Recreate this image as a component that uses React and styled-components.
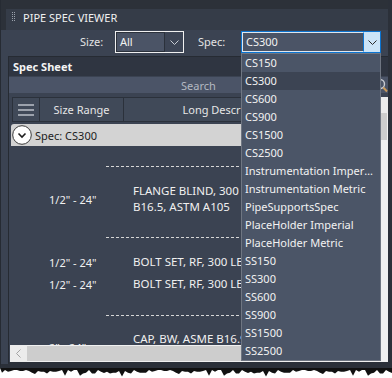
import React from "react";
import styled, { createGlobalStyle } from "styled-components";

const GlobalStyle = createGlobalStyle`
  html, body { margin: 0; padding: 0; background: #ffffff; }
  body { font-family: "Segoe UI", "Noto Sans", sans-serif; font-size: 11px; }
`;

const Screen = styled.div`
  width: 392px;
  height: 378px;
  overflow: hidden;
  background: #ffffff;
  display: flex;
  flex-direction: column;
`;

const Palette = styled.div`
  height: 368px;
  flex-shrink: 0;
  box-sizing: border-box;
  background: #3b4352;
  border-left: 1px solid #262b33;
  border-right: 4px solid #2b3039;
  border-bottom: 4px solid #2b3039;
  display: flex;
  flex-direction: column;
`;

const TopStrip = styled.div`
  background: #2c3139;
  padding: 9px 0 0 5px;
`;

const TitleBar = styled.div`
  height: 21px;
  box-sizing: border-box;
  background: #353c48;
  display: flex;
  align-items: flex-start;
  gap: 7px;
  padding: 2px 0 0 6px;
  color: #f0f0f0;
  line-height: 14px;
`;

const Grip = styled.svg`
  margin-top: 1px;
  flex-shrink: 0;
`;

const Toolbar = styled.div`
  height: 25px;
  box-sizing: border-box;
  display: flex;
  align-items: flex-start;
  padding: 1px 0 0 79px;
  color: #e4e4e4;
`;

const Label = styled.span`
  width: ${p => p.$w}px;
  margin-left: ${p => p.$ml || 0}px;
  line-height: 22px;
`;

const Combo = styled.div`
  position: relative;
  width: ${p => p.$w}px;
  height: 22px;
  box-sizing: border-box;
  display: flex;
  border: 1px solid ${p => (p.$open ? "#0b74d1" : "#f0f0f0")};
`;

const ComboText = styled.div`
  flex: 1;
  box-sizing: border-box;
  background: #4b5466;
  border: 1px solid ${p => (p.$open ? "#dfe7ef" : "#2b313b")};
  border-right: 1px solid ${p => (p.$open ? "#0b74d1" : "#2b313b")};
  color: #f2f2f2;
  padding-left: 3px;
  line-height: 18px;
`;

const ComboArrow = styled.div`
  width: ${p => (p.$open ? 16 : 18)}px;
  display: flex;
  align-items: center;
  justify-content: center;
  background: ${p => (p.$open ? "#cce4f7" : "#3d4555")};
`;

const DropList = styled.div`
  position: absolute;
  top: 21px;
  left: -1px;
  width: 140px;
  box-sizing: border-box;
  border: 1px solid #6f7682;
  background: #4b5567;
  z-index: 10;
`;

const DropItem = styled.div`
  height: 18px;
  line-height: 18px;
  padding: 0 7px 0 3px;
  color: #f2f2f2;
  white-space: nowrap;
  overflow: hidden;
  text-overflow: ellipsis;
  background: ${p => (p.$active ? "#3c4453" : "transparent")};
`;

const Panel = styled.div`
  flex: 1;
  min-height: 0;
  margin: 1px 0 0 7px;
  display: flex;
  flex-direction: column;
  border-top: 1px solid #262b33;
  border-left: 1px solid #262b33;
  border-bottom: 2px solid #2b3039;
`;

const SheetHeader = styled.div`
  height: 19px;
  line-height: 19px;
  padding-left: 4px;
  background: #2f3541;
  color: #f4f4f4;
  font-weight: bold;
`;

const SearchRow = styled.div`
  margin-top: 1px;
  height: 16px;
  display: grid;
  grid-template-columns: 1fr auto 1fr;
  align-items: center;
  background: #4b5467;
  color: #b4b9c2;
`;

const SearchIcon = styled.svg`
  justify-self: end;
`;

const GridArea = styled.div`
  flex: 1;
  min-height: 0;
  margin-top: 4px;
  display: flex;
`;

const GridMain = styled.div`
  flex: 1;
  min-width: 0;
  padding-left: 3px;
  display: flex;
  flex-direction: column;
  overflow: hidden;
`;

const HeaderRow = styled.div`
  height: 25px;
  flex-shrink: 0;
  box-sizing: border-box;
  display: grid;
  grid-template-columns: 27px 84px 206px 1fr;
  border: 1px solid #2b313b;
  border-right: none;
  background: #404958;
  color: #e6e6e6;
`;

const HeaderCell = styled.div`
  display: flex;
  align-items: center;
  justify-content: center;
  border-right: 1px solid #2b313b;
  white-space: nowrap;
  overflow: hidden;
`;

const GroupRow = styled.div`
  margin: 2px 0 0 -1px;
  height: 22px;
  flex-shrink: 0;
  display: flex;
  align-items: center;
  gap: 3px;
  padding-left: 1px;
  background: #d3d3d3;
  border-radius: 3px 0 0 0;
  color: #1c1c1c;
`;

const Body = styled.div`
  flex: 1;
  min-height: 0;
  overflow: hidden;
  color: #f0f0f0;
`;

const Separator = styled.div`
  height: ${p => p.$h}px;
  box-sizing: border-box;
  padding: ${p => p.$top}px 0 0 94px;
`;

const Dashes = styled.div`
  height: 1px;
  width: 400px;
  background: repeating-linear-gradient(to right, #d6d6d6 0 3px, transparent 3px 5px);
`;

const DataRow = styled.div`
  height: ${p => p.$h}px;
  display: grid;
  grid-template-columns: 27px 84px 1fr;
  align-items: center;
  white-space: nowrap;
`;

const SizeCell = styled.div`
  grid-column: 2;
  padding-left: 10px;
`;

const DescCell = styled.div`
  padding-left: 10px;
  font-size: 11.5px;
  line-height: 16px;
`;

const VScroll = styled.div`
  width: 17px;
  display: flex;
  flex-direction: column;
  background: #f0f0f0;
`;

const ScrollButton = styled.div`
  width: ${p => (p.$h ? "17px" : "auto")};
  height: ${p => (p.$h ? "auto" : "16px")};
  display: flex;
  align-items: center;
  justify-content: center;
  background: #ececec;
  flex-shrink: 0;
`;

const Thumb = styled.div`
  background: #cdcdcd;
  ${p => (p.$h ? "flex: 1; margin: 1px 0;" : "height: 27px; margin: 0 1px;")}
`;

const HScrollRow = styled.div`
  height: 17px;
  flex-shrink: 0;
  display: flex;
  padding-left: 1px;
`;

const HScroll = styled.div`
  flex: 1;
  display: flex;
  background: #f0f0f0;
`;

const Corner = styled.div`
  width: 17px;
  background: #f0f0f0;
`;

const TornEdge = styled.svg`
  display: block;
  flex-shrink: 0;
`;

const Chevron = ({ color }) => (
  <svg width="9" height="5" viewBox="0 0 9 5">
    <polyline points="0.5,0.5 4.5,4.5 8.5,0.5" fill="none" stroke={color} strokeWidth="1" />
  </svg>
);

const specs = [
  "CS150", "CS300", "CS600", "CS900", "CS1500", "CS2500",
  "Instrumentation Imperial", "Instrumentation Metric", "PipeSupportsSpec",
  "PlaceHolder Imperial", "PlaceHolder Metric",
  "SS150", "SS300", "SS600", "SS900", "SS1500", "SS2500",
];

const rows = [
  { type: "sep", h: 37, top: 20 },
  { type: "row", h: 32, size: "1/2\" - 24\"", desc: ["FLANGE BLIND, 300 LB, RF, ASME", "B16.5, ASTM A105"] },
  { type: "sep", h: 36, top: 22 },
  { type: "row", h: 22, size: "1/2\" - 24\"", desc: ["BOLT SET, RF, 300 LB, ASTM A193 B7"] },
  { type: "row", h: 22, size: "1/2\" - 24\"", desc: ["BOLT SET, RF, 300 LB, ASTM A193 B7M"] },
  { type: "sep", h: 36, top: 20 },
  { type: "row", h: 32, size: "2\" - 24\"", desc: ["CAP, BW, ASME B16.9, ASTM A234", "GR WPB"] },
];

const tornPath = (() => {
  let d = "M0,0 L392,0 ";
  let seed = 7;
  for (let x = 392; x >= 0; x -= 3) {
    seed = (seed * 53 + 17) % 97;
    const y = 2 + (seed % 5) * 0.9 + (seed % 11 === 0 ? 3 : 0);
    d += `L${x},${y.toFixed(1)} `;
  }
  return d + "Z";
})();

const App = () => {
  return (
    <Screen>
      <GlobalStyle />
      <Palette>
        <TopStrip>
          <TitleBar>
            <Grip width="4" height="10" viewBox="0 0 4 10">
              {[0, 2, 4, 6, 8].map(y => (
                <g key={y} fill="#9aa1ab">
                  <rect x="0" y={y} width="1" height="1" />
                  <rect x="2" y={y} width="1" height="1" />
                </g>
              ))}
            </Grip>
            <span>PIPE SPEC VIEWER</span>
          </TitleBar>
        </TopStrip>

        <Toolbar>
          <Label $w={35}>Size:</Label>
          <Combo $w={69}>
            <ComboText>All</ComboText>
            <ComboArrow>
              <Chevron color="#c9cdd4" />
            </ComboArrow>
          </Combo>
          <Label $w={43} $ml={14}>Spec:</Label>
          <Combo $w={140} $open>
            <ComboText $open>CS300</ComboText>
            <ComboArrow $open>
              <Chevron color="#2a2a2a" />
            </ComboArrow>
            <DropList>
              {specs.map(s => (
                <DropItem key={s} $active={s === "CS300"}>{s}</DropItem>
              ))}
            </DropList>
          </Combo>
        </Toolbar>

        <Panel>
          <SheetHeader>Spec Sheet</SheetHeader>
          <SearchRow>
            <span />
            <span>Search</span>
            <SearchIcon width="14" height="15" viewBox="0 0 14 15">
              <circle cx="6" cy="6" r="4.5" fill="none" stroke="#c9ccd2" strokeWidth="1.4" />
              <line x1="9.3" y1="9.5" x2="13" y2="13.5" stroke="#c99a5a" strokeWidth="2" />
            </SearchIcon>
          </SearchRow>

          <GridArea>
            <GridMain>
              <HeaderRow>
                <HeaderCell>
                  <svg width="16" height="12" viewBox="0 0 16 12">
                    <g fill="#9ca2ac">
                      <rect x="0" y="0" width="16" height="2" />
                      <rect x="0" y="5" width="16" height="2" />
                      <rect x="0" y="10" width="16" height="2" />
                    </g>
                  </svg>
                </HeaderCell>
                <HeaderCell>Size Range</HeaderCell>
                <HeaderCell>Long Description</HeaderCell>
                <HeaderCell />
              </HeaderRow>
              <GroupRow>
                <svg width="20" height="20" viewBox="0 0 20 20">
                  <circle cx="10" cy="10" r="9.3" fill="#ffffff" stroke="#3a3a3a" strokeWidth="1" />
                  <polyline points="6.5,8.5 10,12 13.5,8.5" fill="none" stroke="#1e1e1e" strokeWidth="1.6" />
                </svg>
                <span>Spec: CS300</span>
              </GroupRow>
              <Body>
                {rows.map((r, i) =>
                  r.type === "sep" ? (
                    <Separator key={i} $h={r.h} $top={r.top}>
                      <Dashes />
                    </Separator>
                  ) : (
                    <DataRow key={i} $h={r.h}>
                      <SizeCell>{r.size}</SizeCell>
                      <DescCell>
                        {r.desc.map(line => (
                          <div key={line}>{line}</div>
                        ))}
                      </DescCell>
                    </DataRow>
                  )
                )}
              </Body>
            </GridMain>
            <VScroll>
              <ScrollButton />
              <Thumb />
            </VScroll>
          </GridArea>

          <HScrollRow>
            <HScroll>
              <ScrollButton $h>
                <svg width="5" height="9" viewBox="0 0 5 9">
                  <polyline points="4.5,0.5 0.5,4.5 4.5,8.5" fill="none" stroke="#a3a3a3" strokeWidth="1" />
                </svg>
              </ScrollButton>
              <Thumb $h />
            </HScroll>
            <Corner />
          </HScrollRow>
        </Panel>
      </Palette>
      <TornEdge width="392" height="10" viewBox="0 0 392 10">
        <path d={tornPath} fill="#111111" />
      </TornEdge>
    </Screen>
  );
};

export default App;
